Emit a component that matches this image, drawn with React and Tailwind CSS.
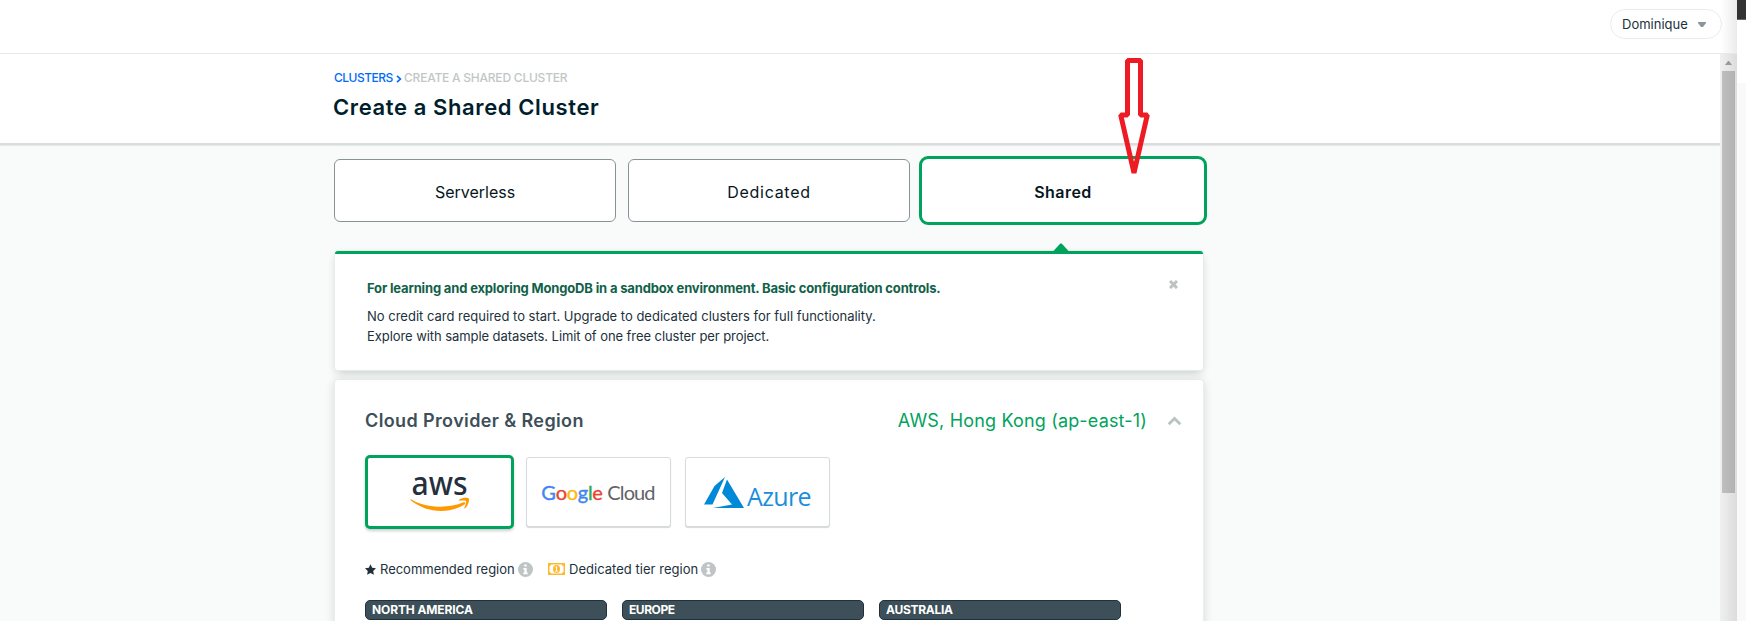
import React from 'react';

function InfoIcon() {
  return (
    <svg className="h-[15px] w-[15px] shrink-0" viewBox="0 0 15 15">
      <circle cx="7.5" cy="7.5" r="7.5" fill="#bfc5c4" />
      <path d="M6.2 2.6h2.5v2H6.2zM5.3 6h3.4v4.6h1v1.7H5.3v-1.7h1V7.6h-1z" fill="#fff" />
    </svg>
  );
}

function TopBar() {
  return (
    <div className="flex h-[54px] shrink-0 items-start justify-end border-b border-[#e7e9e9] bg-white pr-[15px] pt-[9px]">
      <div className="flex h-[30px] w-[112px] items-center rounded-full border border-[#e7eeec] bg-white pl-[11px] pt-px text-[13px] text-[#21313c]">
        <span>Dominique</span>
        <svg className="ml-[10px] h-[5px] w-2" viewBox="0 0 8 5">
          <path d="M0 0h8v1L5 5H3L0 1z" fill="#89979b" />
        </svg>
      </div>
    </div>
  );
}

function Scrollbar() {
  return (
    <div className="flex w-[17px] shrink-0 flex-col items-center bg-linear-to-r from-[#f0f0f0] to-[#dcdcdc]">
      <svg className="mt-[7px] h-1 w-[7px]" viewBox="0 0 7 4">
        <path d="M3 0h1l3 4H0z" fill="#999" />
      </svg>
      <div className="mt-[6px] h-[422px] w-[13px] bg-linear-to-r from-[#bfbfbf] to-[#b2b2b2]" />
    </div>
  );
}

function PageHeader() {
  return (
    <div className="relative h-[91px] border-b-2 border-[#d9dedd] bg-white pl-[334px] pt-4 shadow-[0_1px_1px_#e6eae9]">
      <div className="flex h-4 items-center text-[12px] font-medium leading-4">
        <span className="w-[62px] tracking-[-0.52px] text-[#016bf8]">CLUSTERS</span>
        <svg className="mr-[2px] mt-[2px] h-2 w-[6px]" viewBox="0 0 6 8">
          <path d="M1 0.8L4.4 4L1 7.2" fill="none" stroke="#016bf8" strokeWidth="1.7" />
        </svg>
        <span className="tracking-[-0.22px] text-[#c1c7c6]">CREATE A SHARED CLUSTER</span>
      </div>
      <h1 className="-ml-px mt-[7px] text-[22px] font-semibold leading-7 tracking-[0.61px] text-[#001e2b]">
        Create a Shared Cluster
      </h1>
    </div>
  );
}

function ClusterTypes() {
  const base = 'flex h-[63px] w-[282px] items-center justify-center bg-white pt-[3px] text-[16px] text-[#061621]';
  return (
    <div className="flex gap-3">
      <button className={base + ' rounded-[6px] border border-[#889397]'}>Serverless</button>
      <button className={base + ' rounded-[6px] border border-[#889397] tracking-[0.7px]'}>Dedicated</button>
      <button className={base + ' rounded-[6px] font-semibold tracking-[0.43px] outline-3 outline-[#00a35c]'}>Shared</button>
    </div>
  );
}

function Notice() {
  return (
    <div className="relative ml-px mt-[29px] h-[119px] w-[868px] rounded-[3px] border-t-3 border-[#00a35c] bg-white px-8 pt-6 text-[13px] leading-5 text-[#21313c] shadow-[0_0_1px_1px_#e7eeec,0_4px_10px_-2px_rgba(6,22,33,0.25)]">
      <svg className="absolute left-[718px] top-[-11px] h-[9px] w-4" viewBox="0 0 16 9">
        <path d="M7.3 0.5h1.4L16 8.5V9H0v-.5z" fill="#00a35c" />
      </svg>
      <svg className="absolute right-[25px] top-[26px] h-[9px] w-[9px]" viewBox="0 0 9 9">
        <path d="M1 1l7 7M8 1L1 8" stroke="#bdc1c1" strokeWidth="3" />
      </svg>
      <p className="font-bold tracking-[-0.16px] text-[#116149]">
        For learning and exploring MongoDB in a sandbox environment. Basic configuration controls.
      </p>
      <p className="mt-2">No credit card required to start. Upgrade to dedicated clusters for full functionality.</p>
      <p className="tracking-[-0.07px]">Explore with sample datasets. Limit of one free cluster per project.</p>
    </div>
  );
}

function AwsLogo() {
  return (
    <svg className="h-[64px] w-[62px]" viewBox="0 -12 62 64">
      <text x="2.5" y="22.5" fontSize="32" fontFamily="Noto Sans, sans-serif" fontWeight="500" textLength="56" lengthAdjust="spacingAndGlyphs" fill="#252f3e">aws</text>
      <path d="M2.4 27.4C17 36 39 37 54.5 30.3c1.4-.6 2.5.9 1.2 1.9C40 42.500 18 41 1.800 28.400c-.8-.7-.2-1.400.6-1z" fill="#ff9900" />
      <path d="M50.300 27.500c2.500-1.700 8.400-2.300 9.500-1 .9 1.200-.5 6.800-3.600 9.700-.6.500-1.100.2-.8-.4.700-1.800 2.300-5.700 1.600-6.700-.8-.9-4.700-.6-6.300-.4-.7.100-.9-.7-.4-1.200z" fill="#ff9900" />
    </svg>
  );
}

function GoogleCloudLogo() {
  return (
    <div className="-ml-px flex items-baseline font-[Lato] text-[20px] leading-6">
      <span className="flex w-[66px] tracking-[-0.3px] [-webkit-text-stroke:0.4px]">
        <span className="text-[#4285f4]">G</span>
        <span className="text-[#ea4335]">o</span>
        <span className="text-[#fbbc05]">o</span>
        <span className="text-[#4285f4]">g</span>
        <span className="text-[#34a853]">l</span>
        <span className="text-[#ea4335]">e</span>
      </span>
      <span className="tracking-[-0.9px] text-[#5f6368]">Cloud</span>
    </div>
  );
}

function AzureLogo() {
  return (
    <div className="mt-[3px] flex items-start">
      <svg className="mr-[3px] h-[31px] w-[40px]" viewBox="0 0 40 31">
        <path d="M21 0L10.500 9 0 27.500h8.500z" fill="#0089d6" />
        <path d="M23 2.500l17 28.500H9l19-3.400L18 16z" fill="#0089d6" />
      </svg>
      <span className="mt-[5px] font-['Open_Sans'] text-[25px] leading-7 tracking-[-0.6px] text-[#1b8fdb]">Azure</span>
    </div>
  );
}

function Provider({ children }) {
  return (
    <div className="mt-[2px] flex h-[70px] w-[145px] items-center justify-center rounded-[3px] border border-[#d9dcdc] bg-white shadow-[0_1px_1px_#d4d8d8]">
      {children}
    </div>
  );
}

function RegionHeader({ children, tracking }) {
  return (
    <div className={'h-5 w-[242px] rounded-[5px] border border-[#21313c] bg-[#3d4f58] pl-[6px] text-[12px] font-bold leading-[18px] text-white ' + tracking}>
      {children}
    </div>
  );
}

function ProviderCard() {
  return (
    <div className="mt-[9px] h-[300px] w-[870px] rounded-[4px] border border-[#e7eeec] bg-white px-[30px] pt-[29px] shadow-[0_2px_10px_rgba(6,22,33,0.15)]">
      <div className="flex h-6 items-center text-[18px] leading-6">
        <h2 className="font-semibold tracking-[0.38px] text-[#3d4f58]">Cloud Provider &amp; Region</h2>
        <span className="ml-auto tracking-[0.17px] text-[#00a35c]">AWS, Hong Kong (ap-east-1)</span>
        <svg className="ml-[20px] mr-[-9px] h-[10px] w-[15px]" viewBox="0 0 15 10">
          <path d="M1.700 8.200L7.500 2.500l5.800 5.700" fill="none" stroke="#b8c4c2" strokeWidth="2.8" />
        </svg>
      </div>
      <div className="mt-[22px] flex h-[74px]">
        <div className="mr-3 flex h-[74px] w-[149px] items-center justify-center rounded-[5px] border-3 border-[#00a35c] bg-white shadow-[0_2px_3px_rgba(6,22,33,0.2)]">
          <AwsLogo />
        </div>
        <Provider><GoogleCloudLogo /></Provider>
        <div className="w-[14px]" />
        <Provider><AzureLogo /></Provider>
      </div>
      <div className="mt-[30px] flex h-5 items-center text-[13px] leading-5 text-[#21313c]">
        <svg className="mr-1 h-[11px] w-[11px]" viewBox="0 0 24 23">
          <path d="M12 0l3.700 7.700 8.300 1.100-6.100 5.800L19.400 23 12 18.900 4.600 23l1.500-8.400L0 8.800l8.300-1.100z" fill="#21313c" />
        </svg>
        <span className="w-[138px] tracking-[-0.02px]">Recommended region</span>
        <InfoIcon />
        <svg className="ml-[15px] mr-[4px] h-3 w-[17px]" viewBox="0 0 17 12">
          <rect width="17" height="12" fill="#ffb92e" />
          <path d="M3 1.500h11A1.500 1.500 0 0 0 15.500 3v6a1.500 1.500 0 0 0-1.500 1.500H3A1.500 1.500 0 0 0 1.500 9V3A1.500 1.500 0 0 0 3 1.500z" fill="#fff" />
          <ellipse cx="8.500" cy="6" rx="3.500" ry="4" fill="#ffb92e" />
          <path d="M7.500 4.300l1-.8V8M7.200 8.200h2.600" stroke="#fff" strokeWidth="1" fill="none" />
        </svg>
        <span className="w-[132px] tracking-[0.03px]">Dedicated tier region</span>
        <InfoIcon />
      </div>
      <div className="mt-[21px] flex gap-[15px]">
        <RegionHeader tracking="tracking-[-0.11px]">NORTH AMERICA</RegionHeader>
        <RegionHeader tracking="tracking-[-0.45px]">EUROPE</RegionHeader>
        <RegionHeader tracking="tracking-[-0.29px]">AUSTRALIA</RegionHeader>
      </div>
    </div>
  );
}

export default function App() {
  return (
    <div className="relative flex h-[621px] w-[1746px] overflow-hidden bg-white font-[Inter,sans-serif]">
      <div className="relative flex w-[1737px] flex-col">
        <TopBar />
        <div className="flex min-h-0 flex-1">
          <main className="w-[1720px] overflow-hidden bg-[#f9fbfa]">
            <PageHeader />
            <div className="pl-[334px] pt-[14px]">
              <ClusterTypes />
              <Notice />
              <ProviderCard />
            </div>
          </main>
          <Scrollbar />
        </div>
        <div className="pointer-events-none absolute right-0 top-0 h-[53px] w-4 bg-linear-to-r from-transparent to-black/8" />
      </div>
      <div className="flex flex-1 flex-col">
        <div className="h-5 border-b border-[#666] bg-[#333]" />
        <div className="h-[63px] bg-white" />
        <div className="flex-1 bg-[#f9f9f9]" />
      </div>
      <svg className="absolute left-[1116px] top-[56px] h-[120px] w-9" viewBox="0 0 36 120">
        <path d="M11.500 4.500H24.500V59H31.300L18 117 4.700 59H11.500z" fill="none" stroke="#ed1c24" strokeWidth="5" strokeLinejoin="bevel" />
      </svg>
    </div>
  );
}
